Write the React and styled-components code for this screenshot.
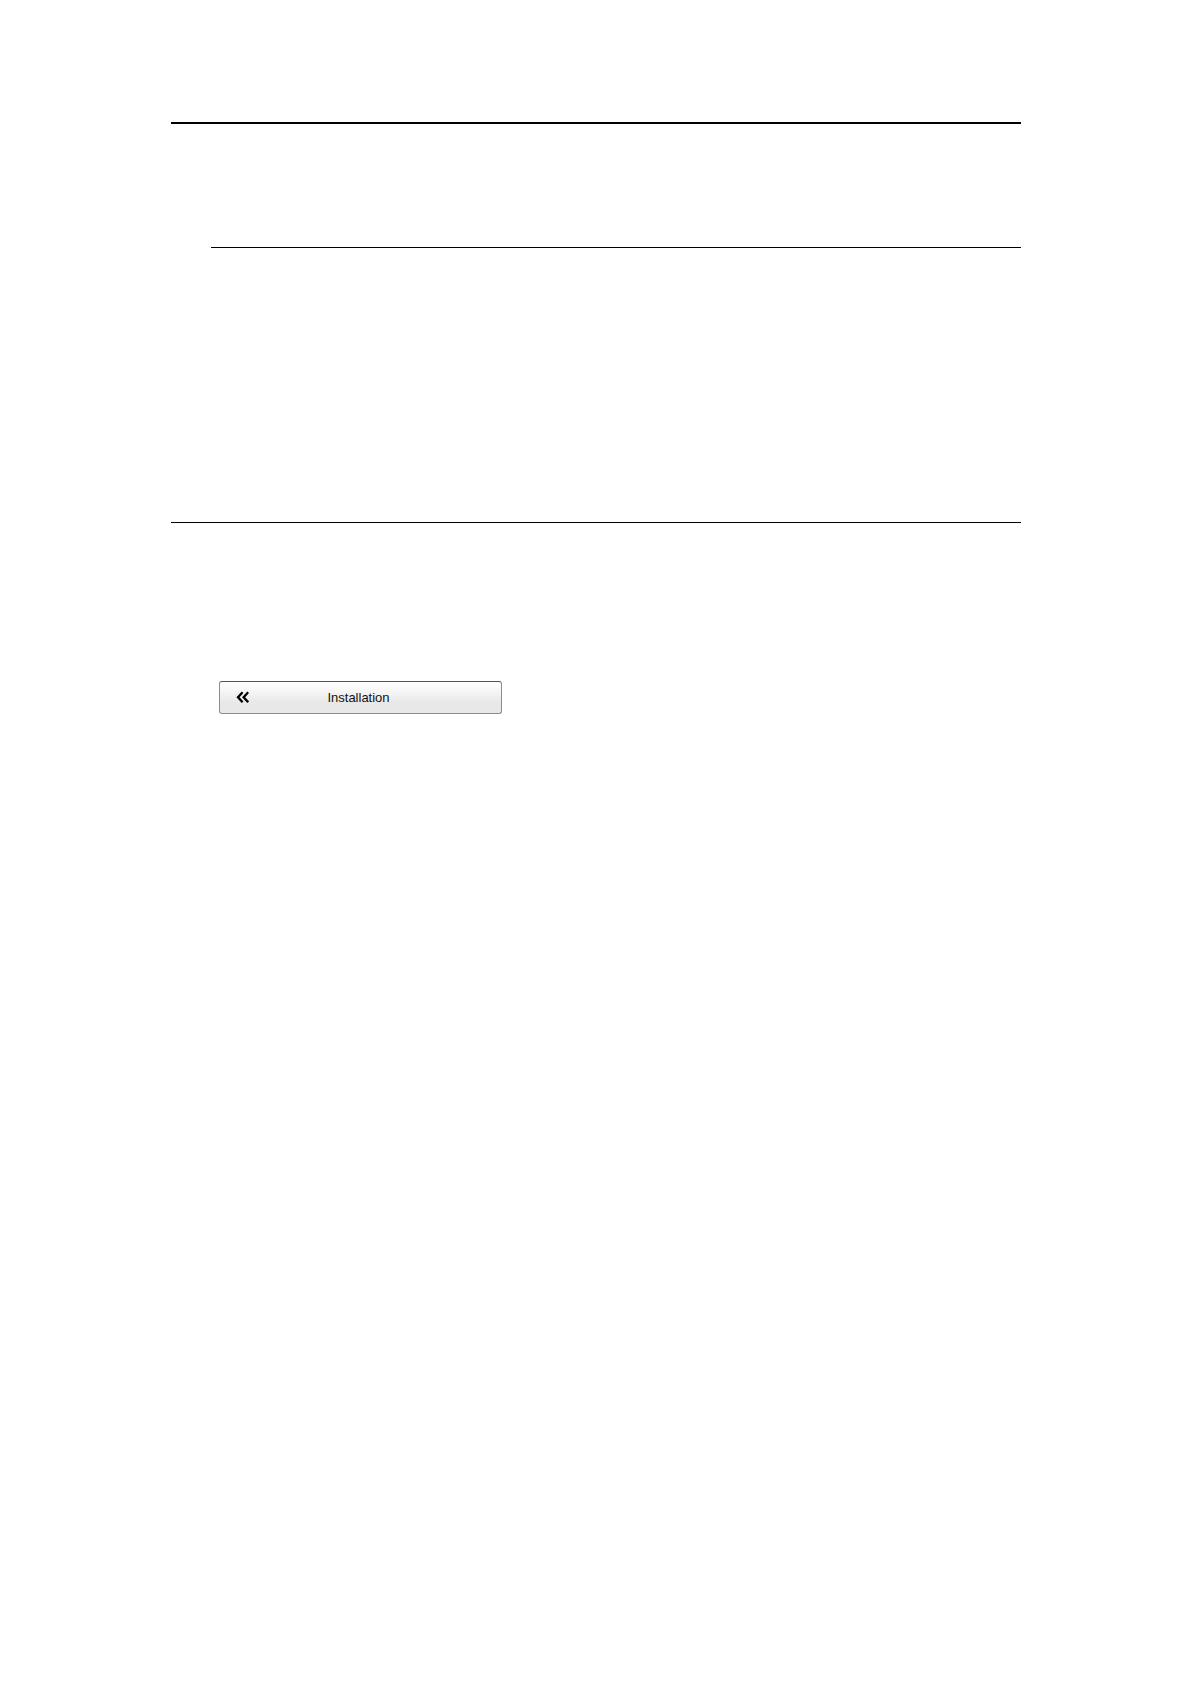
import React from "react";
import styled, { createGlobalStyle } from "styled-components";

const GlobalStyle = createGlobalStyle`
  body {
    margin: 0;
    background: #fff;
  }
`;

const Page = styled("main")`
  box-sizing: border-box;
  min-height: 100vh;
  padding: 122px 170px 0 171px;
`;

const Section = styled("section")`
  padding-bottom: ${(props) => props.$space}px;
`;

const Rule = styled("hr")`
  height: ${(props) => (props.$bold ? 2 : 1)}px;
  margin: 0 0 0 ${(props) => (props.$indent ? 40 : 0)}px;
  border: 0;
  background: #000;
`;

const ButtonRow = styled("div")`
  display: flex;
  padding: 158px 0 0 48px;
`;

const MenuButton = styled("button")`
  display: grid;
  grid-template-columns: 13px 1fr 17px;
  align-items: center;
  box-sizing: border-box;
  width: 283px;
  height: 33px;
  padding: 0 16px;
  border: 1px solid #8c8c8c;
  border-top-color: #555;
  border-radius: 3px;
  background: linear-gradient(#fff, #f4f4f4 35%, #e8e8e8 65%, #e8e8e8);
  color: #111;
  font-family: "Liberation Sans", Arial, sans-serif;
  font-size: 13px;
  line-height: 16px;
  text-align: center;
  cursor: pointer;
`;

const BackIcon = () => (
  <svg width="13" height="13" viewBox="0 0 13 13" aria-hidden="true">
    <path
      d="M6.6 1.2L2 6.2L6.6 11.2M12.2 1.2L7.6 6.2L12.2 11.2"
      fill="none"
      stroke="#000"
      strokeWidth="2.3"
    />
  </svg>
);

const App = () => {
  return (
    <>
      <GlobalStyle />
      <Page>
        <Section $space={123}>
          <Rule $bold />
        </Section>
        <Section $space={274}>
          <Rule $indent />
        </Section>
        <Section $space={0}>
          <Rule />
          <ButtonRow>
            <MenuButton type="button">
              <BackIcon />
              <span>Installation</span>
            </MenuButton>
          </ButtonRow>
        </Section>
      </Page>
    </>
  );
};

export default App;
